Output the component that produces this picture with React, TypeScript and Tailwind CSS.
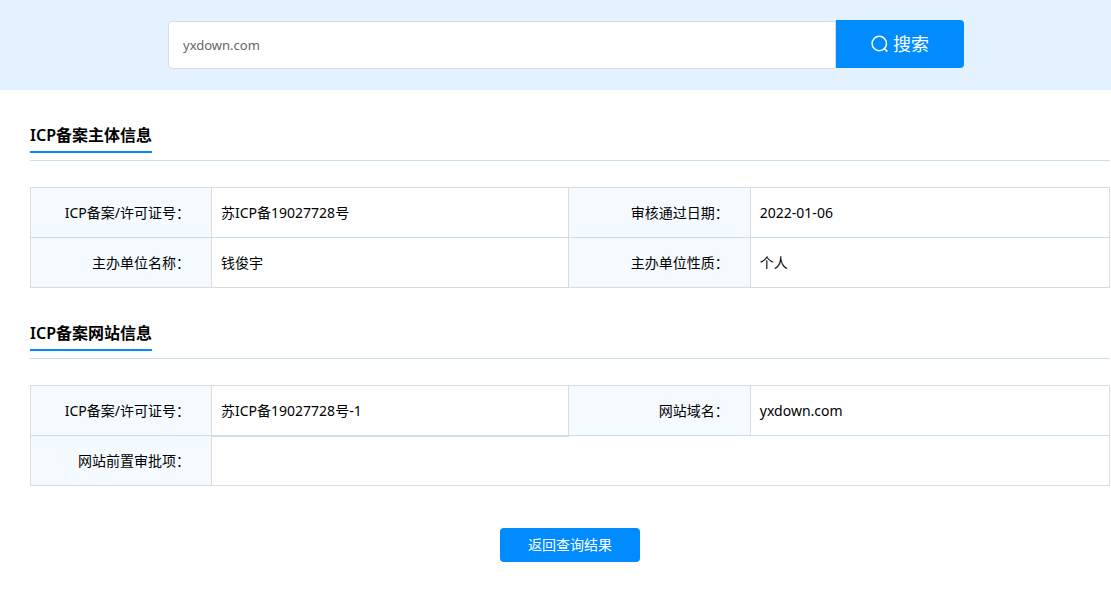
import { useState } from "react";
import type { ReactNode } from "react";

function SearchIcon() {
  return (
    <svg
      className="h-[18px] w-[18px]"
      viewBox="0 0 18 18"
      fill="none"
      stroke="currentColor"
      strokeWidth="1.5"
      aria-hidden="true"
    >
      <circle cx="8.3" cy="8.5" r="7.2" />
      <path d="M13.2 13.4 L16.4 16.6" />
    </svg>
  );
}

function SearchBar() {
  const [query, setQuery] = useState("yxdown.com");
  return (
    <header className="bg-[#e4f2ff] py-5 pl-[21px]">
      <form
        className="mx-auto flex h-[50px] max-w-[796px] items-start"
        onSubmit={(event) => event.preventDefault()}
      >
        <input
          type="text"
          aria-label="域名"
          value={query}
          onChange={(event) => setQuery(event.target.value)}
          className="mt-px h-12 min-w-0 flex-1 rounded-l border border-[#dcdcdc] bg-white px-3.5 text-[13px] text-[#666] outline-none"
        />
        <button
          type="submit"
          className="flex h-12 w-32 items-center justify-center gap-1 rounded-r bg-[#008cff] text-lg text-white"
        >
          <SearchIcon />
          搜索
        </button>
      </form>
    </header>
  );
}

function Section({ title, children }: { title: string; children: ReactNode }) {
  return (
    <section>
      <div className="flex border-b border-[#c9dfee] pb-[7px]">
        <h2 className="border-b-2 border-[#008cff] text-base leading-8 font-semibold">{title}</h2>
      </div>
      <table className="mt-[26px] w-full table-fixed border-separate border-spacing-0 border border-[#dcdcdc] text-sm">
        <tbody>{children}</tbody>
      </table>
    </section>
  );
}

function Label({ children, className = "" }: { children: ReactNode; className?: string }) {
  return (
    <th
      scope="row"
      className={`border-r border-r-[#dcdcdc] bg-[#f5faff] pr-[21px] text-right font-normal ${className}`}
    >
      {children}
    </th>
  );
}

const divided = "border-b border-b-[#c9dfee]";

export default function App() {
  return (
    <div
      lang="zh-CN"
      className="min-h-screen bg-white font-['Noto_Sans','Noto_Sans_CJK_SC',sans-serif] text-black"
    >
      <SearchBar />
      <main className="flex flex-col pt-[29px] pr-px pb-9 pl-[30px]">
        <div className="flex flex-col gap-[29px]">
          <Section title="ICP备案主体信息">
            <tr className="h-[50px]">
              <Label className={`w-[181px] ${divided}`}>ICP备案/许可证号：</Label>
              <td className={`w-[33.1%] border-r border-r-[#dcdcdc] px-[9px] ${divided}`}>苏ICP备19027728号</td>
              <Label className={`w-[182px] ${divided}`}>审核通过日期：</Label>
              <td className={`px-[9px] ${divided}`}>2022-01-06</td>
            </tr>
            <tr className="h-[49px]">
              <Label>主办单位名称：</Label>
              <td className="border-r border-r-[#dcdcdc] px-[9px]">钱俊宇</td>
              <Label>主办单位性质：</Label>
              <td className="px-[9px]">个人</td>
            </tr>
          </Section>
          <Section title="ICP备案网站信息">
            <tr className="h-[50px]">
              <Label className={`w-[181px] ${divided}`}>ICP备案/许可证号：</Label>
              <td
                className={`w-[33.1%] border-r border-r-[#dcdcdc] px-[9px] shadow-[0_1px_0_#c9dfee] ${divided}`}
              >
                苏ICP备19027728号-1
              </td>
              <Label className={`w-[182px] ${divided}`}>网站域名：</Label>
              <td className={`px-[9px] ${divided}`}>yxdown.com</td>
            </tr>
            <tr className="h-[49px]">
              <Label>网站前置审批项：</Label>
              <td colSpan={3} className="px-[9px]" />
            </tr>
          </Section>
        </div>
        <button
          type="button"
          className="mt-[42px] h-[34px] w-[140px] self-center rounded bg-[#008cff] text-sm text-white"
        >
          返回查询结果
        </button>
      </main>
    </div>
  );
}
